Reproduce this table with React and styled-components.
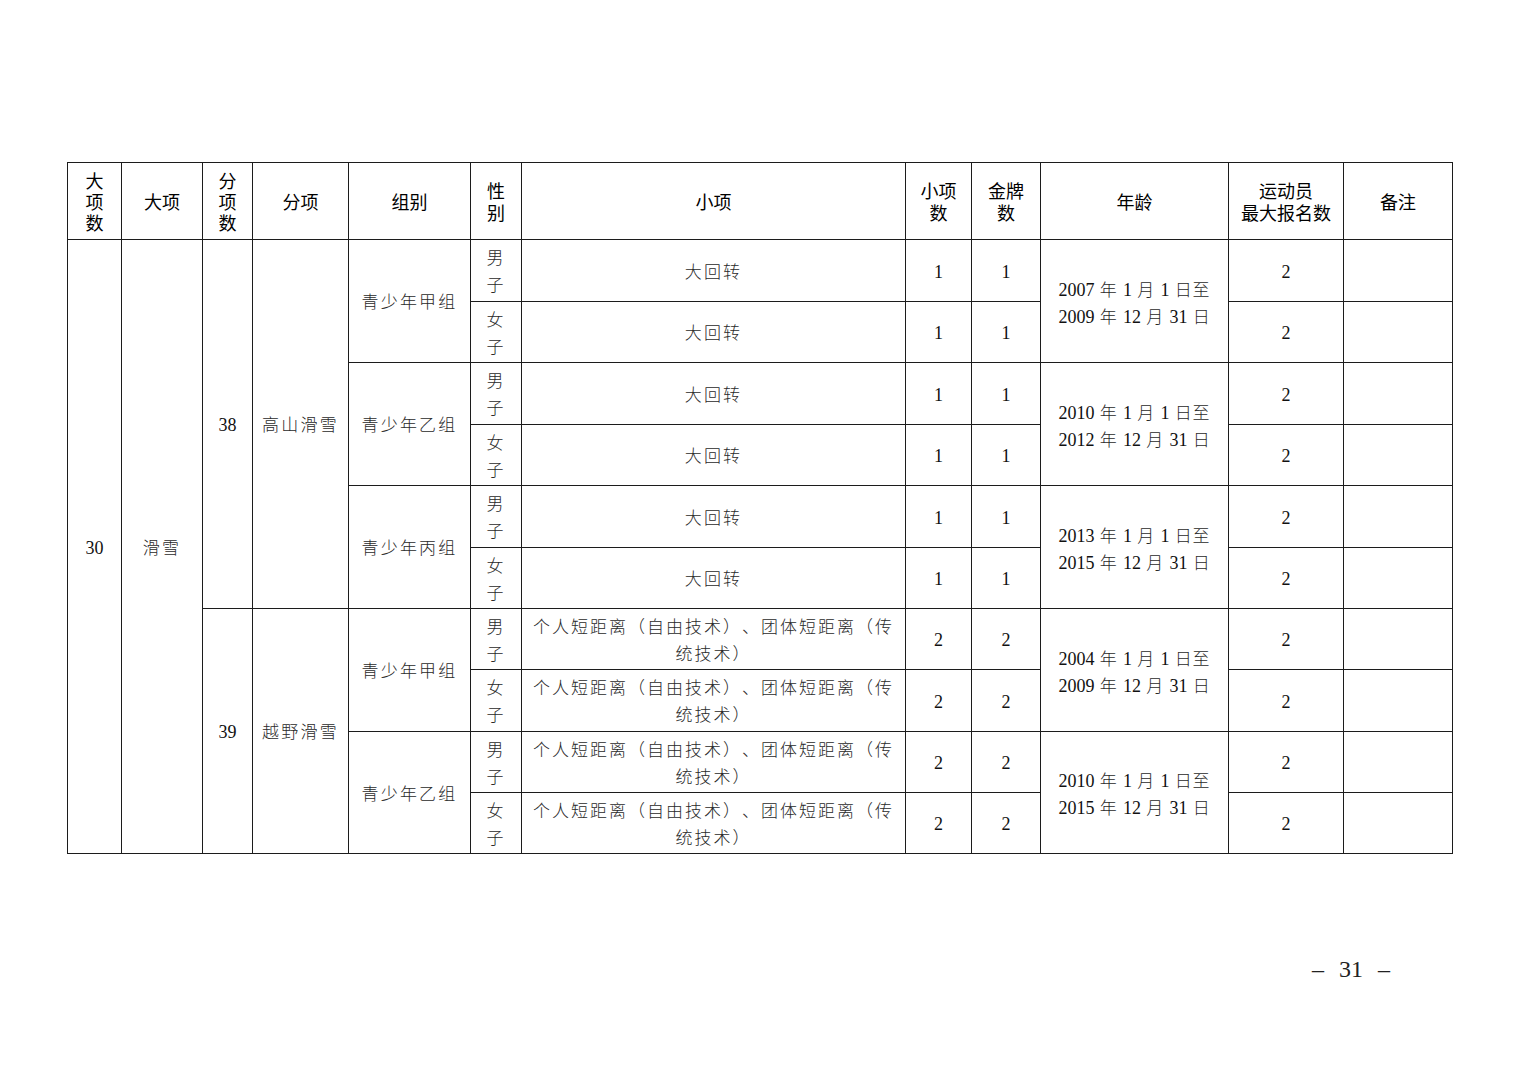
import React from 'react';
import styled, { createGlobalStyle } from 'styled-components';

const GlobalStyle = createGlobalStyle`
	html, body {
		margin: 0;
		padding: 0;
		background: #ffffff;
	}
`;

const Page = styled.div`
	width: 1520px;
	height: 1074px;
	box-sizing: border-box;
	padding: 162px 0 0 67px;
	color: #111;
`;

const Table = styled.table`
	border-collapse: collapse;
	table-layout: fixed;
	width: 1386px;
`;

const HeadRow = styled.tr`
	height: 77px;
`;

const Row = styled.tr`
	height: ${p => p.$h}px;
`;

const HeadCell = styled.th`
	border: 1px solid #1c1c1c;
	padding: 0;
	font-family: 'Noto Sans CJK SC', sans-serif;
	font-weight: 400;
	font-size: 18px;
	line-height: ${p => (p.$tight ? '21px' : '22px')};
	text-align: center;
	vertical-align: middle;
	color: #000;
`;

const Cell = styled.td`
	border: 1px solid #1c1c1c;
	padding: 3px 4px 0;
	font-family: 'Liberation Serif', 'Noto Sans CJK SC', serif;
	font-weight: 300;
	font-size: 17px;
	letter-spacing: ${p => (p.$narrow ? '2px' : '2.2px')};
	line-height: 27px;
	text-align: center;
	vertical-align: middle;
	color: #2a2a2a;
	text-spacing-trim: space-all;
	font-feature-settings: 'fwid' 1;
`;

const Num = styled.span`
	font-family: 'Liberation Serif', serif;
	font-weight: 400;
	font-size: 18px;
	letter-spacing: 0;
	color: #111;
`;

const AgeCell = styled(Cell)`
	letter-spacing: 1px;
	padding-top: 5px;
`;

const Footer = styled.div`
	margin-top: 101px;
	padding-right: 130px;
	text-align: right;
	font-family: 'Liberation Serif', serif;
	font-size: 24px;
	line-height: 28px;
	word-spacing: 9px;
	color: #222;
`;

const widths = [54, 81, 50, 96, 122, 51, 384, 66, 69, 188, 115, 109];
const rowHeights = [62, 61, 62, 61, 62, 61, 61, 62, 61, 61];

const LONG_EVENT = ['个人短距离（自由技术）、团体短距离（传', '统技术）'];

const sections = [
	{
		sub: '38',
		name: '高山滑雪',
		groups: [
			{ group: '青少年甲组', from: ['2007', '1', '1'], to: ['2009', '12', '31'], event: ['大回转'], n: 1 },
			{ group: '青少年乙组', from: ['2010', '1', '1'], to: ['2012', '12', '31'], event: ['大回转'], n: 1 },
			{ group: '青少年丙组', from: ['2013', '1', '1'], to: ['2015', '12', '31'], event: ['大回转'], n: 1 },
		],
	},
	{
		sub: '39',
		name: '越野滑雪',
		groups: [
			{ group: '青少年甲组', from: ['2004', '1', '1'], to: ['2009', '12', '31'], event: LONG_EVENT, n: 2 },
			{ group: '青少年乙组', from: ['2010', '1', '1'], to: ['2015', '12', '31'], event: LONG_EVENT, n: 2 },
		],
	},
];

const Lines = ({ lines }) =>
	lines.map((l, i) => (
		<React.Fragment key={i}>
			{i > 0 && <br />}
			{l}
		</React.Fragment>
	));

const AgeRange = ({ from, to }) => (
	<>
		<Num>{from[0]}</Num> 年 <Num>{from[1]}</Num> 月 <Num>{from[2]}</Num> 日至
		<br />
		<Num>{to[0]}</Num> 年 <Num>{to[1]}</Num> 月 <Num>{to[2]}</Num> 日
	</>
);

const buildRows = () => {
	const rows = [];
	let idx = 0;
	sections.forEach((sec, si) => {
		const secSpan = sec.groups.length * 2;
		sec.groups.forEach((g, gi) => {
			['男子', '女子'].forEach((sex, xi) => {
				const cells = [];
				if (si === 0 && gi === 0 && xi === 0) {
					cells.push(
						<Cell key="big" rowSpan={rowHeights.length}><Num>30</Num></Cell>,
						<Cell key="bigname" rowSpan={rowHeights.length}>滑雪</Cell>
					);
				}
				if (gi === 0 && xi === 0) {
					cells.push(
						<Cell key="sub" rowSpan={secSpan}><Num>{sec.sub}</Num></Cell>,
						<Cell key="subname" rowSpan={secSpan}>{sec.name}</Cell>
					);
				}
				if (xi === 0) {
					cells.push(<Cell key="group" rowSpan={2}>{g.group}</Cell>);
				}
				cells.push(
					<Cell key="sex"><Lines lines={[sex[0], sex[1]]} /></Cell>,
					<Cell key="event" $narrow={g.event.length > 1}><Lines lines={g.event} /></Cell>,
					<Cell key="n"><Num>{g.n}</Num></Cell>,
					<Cell key="gold"><Num>{g.n}</Num></Cell>
				);
				if (xi === 0) {
					cells.push(
						<AgeCell key="age" rowSpan={2}>
							<AgeRange from={g.from} to={g.to} />
						</AgeCell>
					);
				}
				cells.push(
					<Cell key="max"><Num>2</Num></Cell>,
					<Cell key="note" />
				);
				rows.push(
					<Row key={idx} $h={rowHeights[idx]}>
						{cells}
					</Row>
				);
				idx += 1;
			});
		});
	});
	return rows;
};

const App = () => (
	<>
		<GlobalStyle />
		<Page>
			<Table>
				<colgroup>
					{widths.map((w, i) => (
						<col key={i} style={{ width: w }} />
					))}
				</colgroup>
				<thead>
					<HeadRow>
						<HeadCell $tight>大<br />项<br />数</HeadCell>
						<HeadCell>大项</HeadCell>
						<HeadCell $tight>分<br />项<br />数</HeadCell>
						<HeadCell>分项</HeadCell>
						<HeadCell>组别</HeadCell>
						<HeadCell>性<br />别</HeadCell>
						<HeadCell>小项</HeadCell>
						<HeadCell>小项<br />数</HeadCell>
						<HeadCell>金牌<br />数</HeadCell>
						<HeadCell>年龄</HeadCell>
						<HeadCell>运动员<br />最大报名数</HeadCell>
						<HeadCell>备注</HeadCell>
					</HeadRow>
				</thead>
				<tbody>{buildRows()}</tbody>
			</Table>
			<Footer>– 31 –</Footer>
		</Page>
	</>
);

export default App;
